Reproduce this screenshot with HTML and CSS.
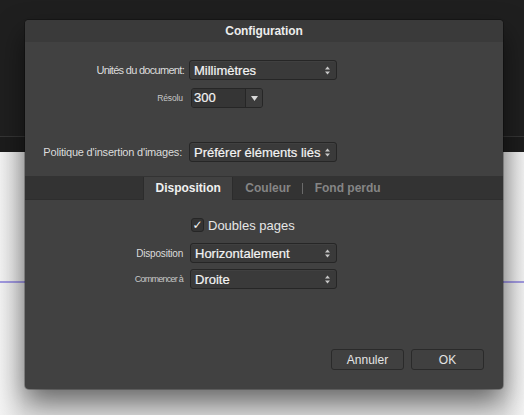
FILE: index.html
```html
<!DOCTYPE html>
<html lang="fr">
<head>
<meta charset="utf-8">
<title>Configuration</title>
<link rel="stylesheet" href="styles.css">
</head>
<body>
<div class="app">
  <div class="topbar"></div>
  <div class="toolbar"></div>
  <div class="canvas">
    <div class="guide"></div>
  </div>
</div>

<div class="dialog">
  <div class="titlebar">Configuration</div>
  <div class="dbody">
    <div class="form form-top">
      <label class="lbl lbl-units">Unités du document:</label>
      <div class="select"><span class="val">Millimètres</span><svg class="stepper" width="5" height="9" viewBox="0 0 5 9"><polygon points="0,3.5 2.5,0.5 5,3.5"/><polygon points="0,5.5 2.5,8.5 5,5.5"/></svg></div>

      <label class="lbl lbl-small">Résolu</label>
      <div class="combo"><span class="cval">300</span><span class="carrow"><svg width="7" height="5" viewBox="0 0 7 5"><polygon points="0,0 7,0 3.5,5"/></svg></span></div>
    </div>

    <div class="form form-policy">
      <label class="lbl lbl-policy">Politique d'insertion d'images:</label>
      <div class="select"><span class="val">Préférer éléments liés</span><svg class="stepper" width="5" height="9" viewBox="0 0 5 9"><polygon points="0,3.5 2.5,0.5 5,3.5"/><polygon points="0,5.5 2.5,8.5 5,5.5"/></svg></div>
    </div>

    <div class="tabbar">
      <div class="tab active">Disposition</div>
      <div class="tab">Couleur</div>
      <div class="tab sep">Fond perdu</div>
    </div>

    <div class="form form-layout">
      <span></span>
      <div class="check-row"><span class="checkbox">✓</span><span class="check-text">Doubles pages</span></div>

      <label class="lbl lbl-mid">Disposition</label>
      <div class="select select-b"><span class="val">Horizontalement</span><svg class="stepper" width="5" height="9" viewBox="0 0 5 9"><polygon points="0,3.5 2.5,0.5 5,3.5"/><polygon points="0,5.5 2.5,8.5 5,5.5"/></svg></div>

      <label class="lbl lbl-start">Commencer à</label>
      <div class="select select-b"><span class="val">Droite</span><svg class="stepper" width="5" height="9" viewBox="0 0 5 9"><polygon points="0,3.5 2.5,0.5 5,3.5"/><polygon points="0,5.5 2.5,8.5 5,5.5"/></svg></div>
    </div>

    <div class="buttons">
      <button class="btn">Annuler</button>
      <button class="btn">OK</button>
    </div>
  </div>
</div>
</body>
</html>
```

FILE: styles.css
```css
* { box-sizing: border-box; }

html, body {
  margin: 0;
  padding: 0;
  width: 524px;
  height: 415px;
  overflow: hidden;
  font-family: "Liberation Sans", Arial, sans-serif;
}

.app {
  width: 524px;
  height: 415px;
  display: flex;
  flex-direction: column;
  background: #f1f1f1;
}

.topbar {
  height: 137px;
  background: #1f1f1f;
  border-bottom: 1px solid #353535;
  flex: none;
}

.toolbar {
  height: 15px;
  background: #1c1c1c;
  flex: none;
}

.canvas {
  flex: 1;
  background: linear-gradient(to right, #f3f3f3 0px, #e2e2e2 25px, #e2e2e2 503px, #f3f3f3 524px);
  padding-top: 129px;
}

.guide {
  height: 2px;
  background: #a199e0;
}

.dialog {
  position: absolute;
  left: 25px;
  top: 20px;
  width: 478px;
  height: 369px;
  background: #414141;
  border-radius: 4px;
  box-shadow: 0 14px 28px rgba(0, 0, 0, 0.55), 0 0 0 1px rgba(0, 0, 0, 0.25);
  display: flex;
  flex-direction: column;
  overflow: hidden;
}

.titlebar {
  height: 22px;
  flex: none;
  background: #3a3a3a;
  color: #ececec;
  font-size: 12px;
  font-weight: bold;
  text-align: center;
  line-height: 22px;
  letter-spacing: -0.1px;
}

.dbody {
  flex: 1;
  display: flex;
  flex-direction: column;
}

.form {
  display: grid;
  grid-template-columns: 159px 1fr;
  column-gap: 5px;
  align-items: center;
}

.form-top {
  margin-top: 18px;
  row-gap: 8px;
}

.form-policy {
  margin-top: 34px;
}

.form-layout {
  margin-top: 15px;
  grid-template-rows: 20px 20px 20px;
  row-gap: 8px;
}

.form-layout > .select-b:last-child {
  margin-top: -4px;
}

.lbl {
  justify-self: end;
  color: #dcdcdc;
  font-size: 11px;
  letter-spacing: -0.25px;
  white-space: nowrap;
}

.lbl-units { letter-spacing: -0.7px; }
.lbl-policy { letter-spacing: -0.2px; margin-right: 2px; }
.lbl-mid { font-size: 10px; letter-spacing: -0.2px; margin-right: 1px; }

.lbl-small {
  font-size: 8.5px;
  letter-spacing: -0.1px;
  color: #c8c8c8;
  margin-right: 1px;
}

.lbl-start {
  font-size: 9px;
  letter-spacing: -0.75px;
  color: #c8c8c8;
  margin-right: 1px;
  margin-top: -4px;
}

.select {
  width: 148px;
  height: 20px;
  background: #3a3a3a;
  border: 1px solid #262626;
  border-radius: 3px;
  display: flex;
  align-items: center;
  justify-content: space-between;
  padding: 0 6px 0 4px;
  box-shadow: inset 0 1px 0 rgba(255, 255, 255, 0.03);
}

.select-b {
  margin-left: 1px;
  width: 147px;
}

.val {
  color: #f4f4f4;
  font-size: 13px;
  white-space: nowrap;
  -webkit-text-stroke: 0.2px #f4f4f4;
}

.stepper { fill: #c8c8c8; flex: none; }

.combo {
  margin-left: 2px;
  width: 72px;
  height: 20px;
  display: flex;
  border: 1px solid #262626;
  border-radius: 3px;
  overflow: hidden;
}

.cval {
  flex: 1;
  background: #353535;
  color: #f4f4f4;
  font-size: 13px;
  line-height: 18px;
  padding-left: 2px;
  -webkit-text-stroke: 0.2px #f4f4f4;
}

.carrow {
  width: 17px;
  background: #3c3c3c;
  border-left: 1px solid #262626;
  display: flex;
  align-items: center;
  justify-content: center;
}

.carrow svg { fill: #d8d8d8; }

.tabbar {
  margin-top: 14px;
  height: 24px;
  background: #333333;
  border-bottom: 1px solid #2e2e2e;
  display: flex;
  align-items: flex-end;
  padding-left: 118px;
}

.tab {
  height: 22px;
  line-height: 22px;
  font-size: 12px;
  font-weight: bold;
  color: #858585;
  padding: 0 11px 0 12px;
  position: relative;
}

.tab.active {
  background: #414141;
  color: #f0f0f0;
  padding: 0 11.5px;
  margin-bottom: -1px;
  height: 23px;
  border-left: 1px solid #2c2c2c;
  border-right: 1px solid #2c2c2c;
}

.tab.sep {
  padding-left: 13px;
}

.tab.sep::before {
  content: "";
  position: absolute;
  left: 0;
  top: 6px;
  width: 1px;
  height: 11px;
  background: #6a6a6a;
}

.check-row {
  display: flex;
  align-items: center;
  margin-left: 2px;
  gap: 4px;
}

.checkbox {
  width: 13px;
  height: 14px;
  background: #343434;
  border: 1px solid #262626;
  border-radius: 3px;
  color: #f8f8f8;
  font-family: "DejaVu Sans", sans-serif;
  font-size: 12px;
  line-height: 12px;
  text-align: center;
}

.check-text {
  color: #e6e6e6;
  font-size: 13px;
}

.buttons {
  margin-top: auto;
  margin-bottom: 19px;
  margin-right: 19px;
  display: flex;
  justify-content: flex-end;
  gap: 7px;
}

.btn {
  width: 73px;
  height: 21px;
  background: #404040;
  border: 1px solid #2a2a2a;
  border-radius: 3px;
  color: #e4e4e4;
  font-family: "Liberation Sans", Arial, sans-serif;
  font-size: 12px;
  padding: 0;
}
```
